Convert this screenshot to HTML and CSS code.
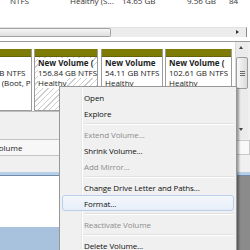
FILE: index.html
```html
<!DOCTYPE html>
<html lang="en">
<head>
    <meta charset="UTF-8">
    <title>Disk Management</title>
    <link rel="stylesheet" href="styles.css">
</head>
<body>
    <div class="screen">
        <div class="list">
            <div class="row">
                <span>NTFS</span>
                <span>Healthy (S...</span>
                <span>14.65 GB</span>
                <span>9.56 GB</span>
                <span>84</span>
            </div>
            <div class="hscroll">
                <div class="hthumb"></div>
                <span class="arrow-right"></span>
            </div>
        </div>

        <div class="middle">
            <div class="pane">
                <div class="parts">
                    <div class="part part-first">
                        <div class="band"></div>
                        <div class="body">
                            <div class="lines">
                                <b>(C:)</b>
                                <span>37.78 GB NTFS</span>
                                <span>Healthy (Boot, Page File)</span>
                            </div>
                        </div>
                    </div>
                    <div class="part part-a">
                        <div class="band"></div>
                        <div class="body hatched">
                            <div class="lines">
                                <b>New Volume (</b>
                                <span>156.84 GB NTFS</span>
                                <span>Healthy</span>
                            </div>
                        </div>
                    </div>
                    <div class="part part-b">
                        <div class="band"></div>
                        <div class="body">
                            <div class="lines">
                                <b>New Volume</b>
                                <span>54.11 GB NTFS</span>
                                <span>Healthy</span>
                            </div>
                        </div>
                    </div>
                    <div class="part part-c">
                        <div class="band"></div>
                        <div class="body">
                            <div class="lines">
                                <b>New Volume (</b>
                                <span>102.61 GB NTFS</span>
                                <span>Healthy</span>
                            </div>
                        </div>
                    </div>
                </div>
                <div class="shade"></div>
                <div class="legend"><span>Volume</span></div>
                <div class="shade shade-low"></div>
            </div>
            <div class="side">
                <div class="vscroll">
                    <span class="arrow-up"></span>
                    <div class="vthumb"><i></i><i></i><i></i></div>
                    <span class="arrow-down"></span>
                </div>
                <div class="corner"></div>
                <div class="side-gap"></div>
            </div>
        </div>

        <div class="lower">
            <div class="lower-left">
                <div class="lower-white"></div>
                <div class="lower-bar"></div>
            </div>
            <div class="lower-right"></div>
        </div>

        <!-- context menu over the disk view -->
        <div class="menu">
            <div class="item">Open</div>
            <div class="item">Explore</div>
            <div class="sep"></div>
            <div class="item off">Extend Volume...</div>
            <div class="item">Shrink Volume...</div>
            <div class="item off">Add Mirror...</div>
            <div class="sep"></div>
            <div class="item">Change Drive Letter and Paths...</div>
            <div class="item hover">Format...</div>
            <div class="sep"></div>
            <div class="item off">Reactivate Volume</div>
            <div class="sep"></div>
            <div class="item">Delete Volume...</div>
        </div>
    </div>
</body>
</html>
```

FILE: styles.css
```css
* {
    margin: 0;
    padding: 0;
    box-sizing: border-box;
}

body {
    font-family: 'Open Sans', 'Noto Sans', sans-serif;
    font-size: 8px;
    color: #1b1b1b;
    background: #f0f0f0;
    width: 250px;
    height: 250px;
    overflow: hidden;
}

.screen {
    position: relative;
    width: 250px;
    height: 250px;
    overflow: hidden;
    display: flex;
    flex-direction: column;
}

/* volume list at the top */
.list {
    height: 42px;
    background: #fff;
    border-bottom: 1px solid #9b9b9b;
    flex-shrink: 0;
}

.row {
    display: grid;
    grid-template-columns: 60px 52px 65px 42px auto;
    padding-left: 10px;
    height: 11px;
    line-height: 11px;
    margin-top: -5px;
    color: #333;
}

.hscroll {
    position: relative;
    margin-top: 21px;
    height: 10px;
    width: 247px;
    background: #ececec;
    border-top: 1px solid #e2e2e2;
    border-right: 1px solid #8a8a8a;
}

.hthumb {
    width: 111px;
    height: 9px;
    border: 1px solid #a3a3a3;
    border-left: none;
    border-radius: 0 2px 2px 0;
    background: linear-gradient(#f6f6f6, #dedede);
}

.arrow-right {
    position: absolute;
    right: 7px;
    top: 2px;
    border-left: 3px solid #333;
    border-top: 2.5px solid transparent;
    border-bottom: 2.5px solid transparent;
}

/* graphical disk view */
.middle {
    display: flex;
    height: 130px;
    flex-shrink: 0;
}

.pane {
    flex: 1;
    display: flex;
    flex-direction: column;
}

.parts {
    display: flex;
    height: 70px;
    padding-top: 7px;
    background: #fff;
    border-bottom: 1px solid #bdbdbd;
}

.part {
    display: flex;
    flex-direction: column;
    border: 1px solid #9c9c9c;
    border-top: none;
    overflow: hidden;
}

.part-first { width: 32px; margin-right: 2px; border-left: none; }
.part-a { width: 64px; margin-right: 3px; }
.part-b { width: 62px; margin-right: 2px; }
.part-c { width: 67px; }

.band {
    height: 8px;
    background: #7f7c06;
    border-bottom: 1px solid #66640a;
}

.body {
    flex: 1;
    padding: 1px 3px;
    background: #fff;
}

.hatched {
    background: repeating-linear-gradient(135deg, #fff 0 3px, #cdcdcd 3px 4px);
}

.lines {
    display: flex;
    flex-direction: column;
    align-items: flex-start;
    line-height: 10px;
    white-space: nowrap;
}

.lines b,
.lines span {
    background: #fff;
}

.lines b {
    font-weight: 700;
    color: #222;
}

.part-first .lines {
    margin-left: -32px;
}

.shade {
    height: 27px;
    background: #f0f0f0;
}

.shade-low {
    height: 16px;
}

.legend {
    height: 17px;
    line-height: 15px;
    background: #f7f7f7;
    border-top: 1px solid #c4c4c4;
    border-bottom: 1px solid #c4c4c4;
    overflow: hidden;
}

.legend span {
    margin-left: -6px;
}

.side {
    width: 15px;
    display: flex;
    flex-direction: column;
    background: #f0f0f0;
}

.vscroll {
    position: relative;
    height: 97px;
    width: 13px;
    background: #ebebeb;
    border-left: 1px solid #d8d8d8;
}

.arrow-up,
.arrow-down {
    position: absolute;
    left: 3px;
    border-left: 2.5px solid transparent;
    border-right: 2.5px solid transparent;
}

.arrow-up {
    top: 4px;
    border-bottom: 3px solid #444;
}

.arrow-down {
    bottom: 8px;
    border-top: 3px solid #444;
}

.vthumb {
    position: absolute;
    top: 15px;
    left: 0;
    width: 12px;
    height: 32px;
    border: 1px solid #9d9d9d;
    border-radius: 2px;
    background: linear-gradient(90deg, #f7f7f7, #dcdcdc);
    display: flex;
    flex-direction: column;
    justify-content: center;
    align-items: center;
    gap: 1px;
}

.vthumb i {
    width: 5px;
    height: 1px;
    background: #6b6b6b;
}

.corner {
    height: 15px;
    margin-top: 1px;
    background: #f9f9f9;
    border: 1px solid #c9c9c9;
}

.side-gap {
    flex: 1;
}

/* window underneath */
.lower {
    flex: 1;
    display: flex;
    border-top: 3px solid #b8cfe8;
}

.lower-left {
    flex: 1;
    display: flex;
    flex-direction: column;
}

.lower-white {
    height: 52px;
    background: #fff;
    border-top: 1px solid #6f8cad;
}

.lower-bar {
    flex: 1;
    background: #a8c1dd;
}

.lower-right {
    width: 14px;
    background: #8b8b8b;
    border-top: 1px solid #6f8cad;
}

/* context menu */
.menu {
    position: absolute;
    left: 59px;
    top: 86px;
    width: 178px;
    height: 180px;
    padding: 2px;
    background: #f0f0f0;
    border: 1px solid #979797;
    box-shadow: 2px 2px 2px rgba(0, 0, 0, 0.35);
    letter-spacing: -0.12px;
}

.menu::before {
    content: '';
    position: absolute;
    left: 21px;
    top: 2px;
    bottom: 2px;
    width: 1px;
    background: #e6e7e7;
    box-shadow: 1px 0 0 #fff;
}

.item {
    position: relative;
    height: 16px;
    line-height: 16px;
    padding-left: 21px;
    border: 1px solid transparent;
    border-radius: 3px;
    color: #111;
}

.item.off {
    color: #8d8d8d;
}

.item.hover {
    background: linear-gradient(#f4f7fc, #e6eef8);
    border-color: #b7cfeb;
}

.sep {
    height: 5px;
    margin-left: 23px;
    border-top: 2px solid transparent;
}

.sep::after {
    content: '';
    display: block;
    height: 1px;
    background: #e0e0e0;
    box-shadow: 0 1px 0 #fff;
}
```
